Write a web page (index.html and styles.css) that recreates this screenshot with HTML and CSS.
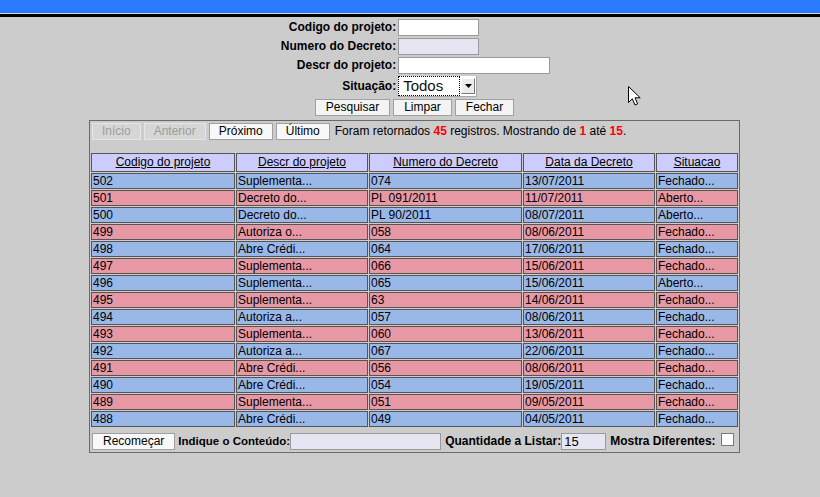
FILE: index.html
```
<!DOCTYPE html>
<html lang="pt">
<head>
<meta charset="utf-8">
<title>Projetos</title>
<link rel="stylesheet" href="styles.css">
</head>
<body>
<div class="topbar"></div>
<div class="topline"></div>
<div class="blackline"></div>
<div class="page">
  <form class="search">
    <label class="lbl">Codigo do projeto:</label>
    <div class="fld"><input class="inp w81" type="text"></div>
    <label class="lbl">Numero do Decreto:</label>
    <div class="fld"><input class="inp inp-lav w81" type="text"></div>
    <label class="lbl">Descr do projeto:</label>
    <div class="fld"><input class="inp w152" type="text"></div>
    <label class="lbl lbl-sel">Situação:</label>
    <div class="fld">
      <div class="select">
        <span class="select-val">Todos</span>
        <span class="select-btn"><svg width="7" height="4" viewBox="0 0 7 4"><path d="M0 0H7L3.5 4Z" fill="#000"/></svg></span>
      </div>
    </div>
    <div class="actions">
      <button type="button" class="btn">Pesquisar</button>
      <button type="button" class="btn">Limpar</button>
      <button type="button" class="btn">Fechar</button>
    </div>
  </form>

  <div class="box">
    <div class="toolbar">
      <button type="button" class="pbtn pbtn-off">Início</button>
      <button type="button" class="pbtn pbtn-off">Anterior</button>
      <button type="button" class="pbtn">Próximo</button>
      <button type="button" class="pbtn">Último</button>
      <span class="info">Foram retornados <b>45</b> registros. Mostrando de <b>1</b> até <b>15</b>.</span>
    </div>
    <table class="grid">
      <colgroup>
        <col class="c1"><col class="c2"><col class="c3"><col class="c4"><col class="c5">
      </colgroup>
      <thead>
        <tr><th><a>Codigo do projeto</a></th><th><a>Descr do projeto</a></th><th><a>Numero do Decreto</a></th><th><a>Data da Decreto</a></th><th><a>Situacao</a></th></tr>
      </thead>
      <tbody>
        <tr class="b"><td>502</td><td>Suplementa...</td><td>074</td><td>13/07/2011</td><td>Fechado...</td></tr>
        <tr class="p"><td>501</td><td>Decreto do...</td><td>PL 091/2011</td><td>11/07/2011</td><td>Aberto...</td></tr>
        <tr class="b"><td>500</td><td>Decreto do...</td><td>PL 90/2011</td><td>08/07/2011</td><td>Aberto...</td></tr>
        <tr class="p"><td>499</td><td>Autoriza o...</td><td>058</td><td>08/06/2011</td><td>Fechado...</td></tr>
        <tr class="b"><td>498</td><td>Abre Crédi...</td><td>064</td><td>17/06/2011</td><td>Fechado...</td></tr>
        <tr class="p"><td>497</td><td>Suplementa...</td><td>066</td><td>15/06/2011</td><td>Fechado...</td></tr>
        <tr class="b"><td>496</td><td>Suplementa...</td><td>065</td><td>15/06/2011</td><td>Aberto...</td></tr>
        <tr class="p"><td>495</td><td>Suplementa...</td><td>63</td><td>14/06/2011</td><td>Fechado...</td></tr>
        <tr class="b"><td>494</td><td>Autoriza a...</td><td>057</td><td>08/06/2011</td><td>Fechado...</td></tr>
        <tr class="p"><td>493</td><td>Suplementa...</td><td>060</td><td>13/06/2011</td><td>Fechado...</td></tr>
        <tr class="b"><td>492</td><td>Autoriza a...</td><td>067</td><td>22/06/2011</td><td>Fechado...</td></tr>
        <tr class="p"><td>491</td><td>Abre Crédi...</td><td>056</td><td>08/06/2011</td><td>Fechado...</td></tr>
        <tr class="b"><td>490</td><td>Abre Crédi...</td><td>054</td><td>19/05/2011</td><td>Fechado...</td></tr>
        <tr class="p"><td>489</td><td>Suplementa...</td><td>051</td><td>09/05/2011</td><td>Fechado...</td></tr>
        <tr class="b"><td>488</td><td>Abre Crédi...</td><td>049</td><td>04/05/2011</td><td>Fechado...</td></tr>
      </tbody>
    </table>
    <div class="footer">
      <button type="button" class="pbtn rbtn">Recomeçar</button>
      <label class="flbl flbl-sm ml3">Indique o Conteúdo:</label>
      <input class="inp inp-lav w151" type="text">
      <label class="flbl ml4">Quantidade a Listar:</label>
      <input class="inp inp-lav w45 qty" type="text" value="15">
      <label class="flbl ml4">Mostra Diferentes:</label>
      <input class="chk" type="checkbox">
    </div>
  </div>
</div>
<svg class="cursor" width="13" height="20" viewBox="0 0 13 20"><path d="M0.5 0.5V16.5L4.3 12.8L7 19L9.6 17.9L7 11.8H12.2Z" fill="#fff" stroke="#000" stroke-width="1" stroke-linejoin="miter"/></svg>
</body>
</html>
```
FILE: styles.css
```
html, body {
  margin: 0;
  padding: 0;
}
body {
  background: #cccccc;
  font-family: "Liberation Sans", Arial, sans-serif;
  font-size: 12px;
  color: #000;
  width: 820px;
  height: 497px;
  overflow: hidden;
  position: relative;
}
.topbar {
  height: 13px;
  background: #2b7bff;
}
.topline {
  height: 1px;
  background: #d6d6d6;
}
.blackline {
  height: 3px;
  background: #000;
}
.page {
  padding-left: 9px;
}
.search {
  display: grid;
  grid-template-columns: auto 152px;
  column-gap: 2px;
  row-gap: 2px;
  justify-content: center;
  align-items: center;
  margin: 2px 0 0;
  padding-left: 2px;
}
.lbl {
  font-weight: bold;
  text-align: right;
  line-height: 17px;
  white-space: nowrap;
}
.fld {
  display: flex;
  align-items: center;
}
.inp {
  box-sizing: border-box;
  height: 17px;
  border: 1px solid #9a9a9a;
  background: #fff;
  padding: 0 2px;
  margin: 0;
  font-family: "Liberation Sans", Arial, sans-serif;
  font-size: 13px;
  outline: none;
  flex-shrink: 0;
}
.inp-lav {
  background: #e6e6f2;
}
.w81 { width: 81px; }
.w152 { width: 152px; }
.w151 { width: 151px; }
.w45 { width: 45px; }
.ml3 { margin-left: 3px; }
.ml4 { margin-left: 4px; }
.select {
  box-sizing: border-box;
  width: 79px;
  height: 21px;
  display: flex;
  background: #fff;
  border-right: 1px solid #a8a8a8;
  border-bottom: 1px solid #a8a8a8;
}
.select-val {
  flex: 1;
  border: 1px dotted #000;
  font-size: 15px;
  line-height: 18px;
  padding-left: 4px;
  color: #111;
}
.select-btn {
  box-sizing: border-box;
  width: 14px;
  height: 16px;
  margin: 2px 1px 0 1px;
  background: #ececec;
  border: 1px solid;
  border-color: #fff #7a7a7a #7a7a7a #fff;
  display: flex;
  align-items: center;
  justify-content: center;
}
.actions {
  grid-column: 1 / span 2;
  display: flex;
  justify-content: center;
  gap: 3px;
  margin-left: -2px;
}
.btn, .pbtn {
  box-sizing: border-box;
  height: 17px;
  padding: 0 10px;
  margin: 0;
  border: 1px solid #a0a0a0;
  background: #f4f4f4;
  font-family: "Liberation Sans", Arial, sans-serif;
  font-size: 12px;
  line-height: 15px;
  color: #000;
  border-radius: 0;
  white-space: nowrap;
  flex-shrink: 0;
}
.box {
  width: 651px;
  box-sizing: border-box;
  margin: 4px auto 0;
  border: 1px solid #6a6a6a;
}
.toolbar {
  box-sizing: border-box;
  height: 31px;
  padding: 2px 2px 0;
  display: flex;
  align-items: flex-start;
  gap: 3px;
}
.pbtn {
  padding: 0 9px;
  background: #f8f8f8;
}
.pbtn-off {
  background: #d6d6d6;
  border-color: #e6e6e6;
  color: #9c9c9c;
}
.info {
  margin-left: 2px;
  line-height: 17px;
  white-space: nowrap;
}
.info b {
  color: #ff0000;
}
.grid {
  border-collapse: separate;
  border-spacing: 1px;
  width: 649px;
  table-layout: fixed;
}
.c1 { width: 144px; }
.c2 { width: 132px; }
.c3 { width: 153px; }
.c4 { width: 132px; }
.c5 { width: 82px; }
.grid th, .grid td {
  border: 1px solid #555;
  padding: 0 1px;
  white-space: nowrap;
  overflow: hidden;
  text-align: left;
  font-weight: normal;
}
.grid th {
  background: #ccccff;
  text-align: center;
  height: 17px;
  line-height: 17px;
}
.grid th a {
  text-decoration: underline;
  color: #000;
}
.grid td {
  height: 14px;
  line-height: 14px;
}
.grid tr.b td { background: #99b8e8; }
.grid tr.p td { background: #e898a4; }
.footer {
  box-sizing: border-box;
  height: 24px;
  padding: 5px 2px 0;
  display: flex;
  align-items: flex-start;
}
.rbtn {
  padding: 0 10px;
}
.flbl {
  font-weight: bold;
  line-height: 17px;
  white-space: nowrap;
  flex-shrink: 0;
}
.flbl-sm {
  font-size: 11.5px;
}
.qty {
  font-size: 13px;
}
.chk {
  appearance: none;
  -webkit-appearance: none;
  box-sizing: border-box;
  width: 13px;
  height: 13px;
  margin: 0 0 0 5px;
  border: 1px solid #7a7a7a;
  background: #fff;
  flex-shrink: 0;
}
.cursor {
  position: absolute;
  left: 628px;
  top: 86px;
}
```
